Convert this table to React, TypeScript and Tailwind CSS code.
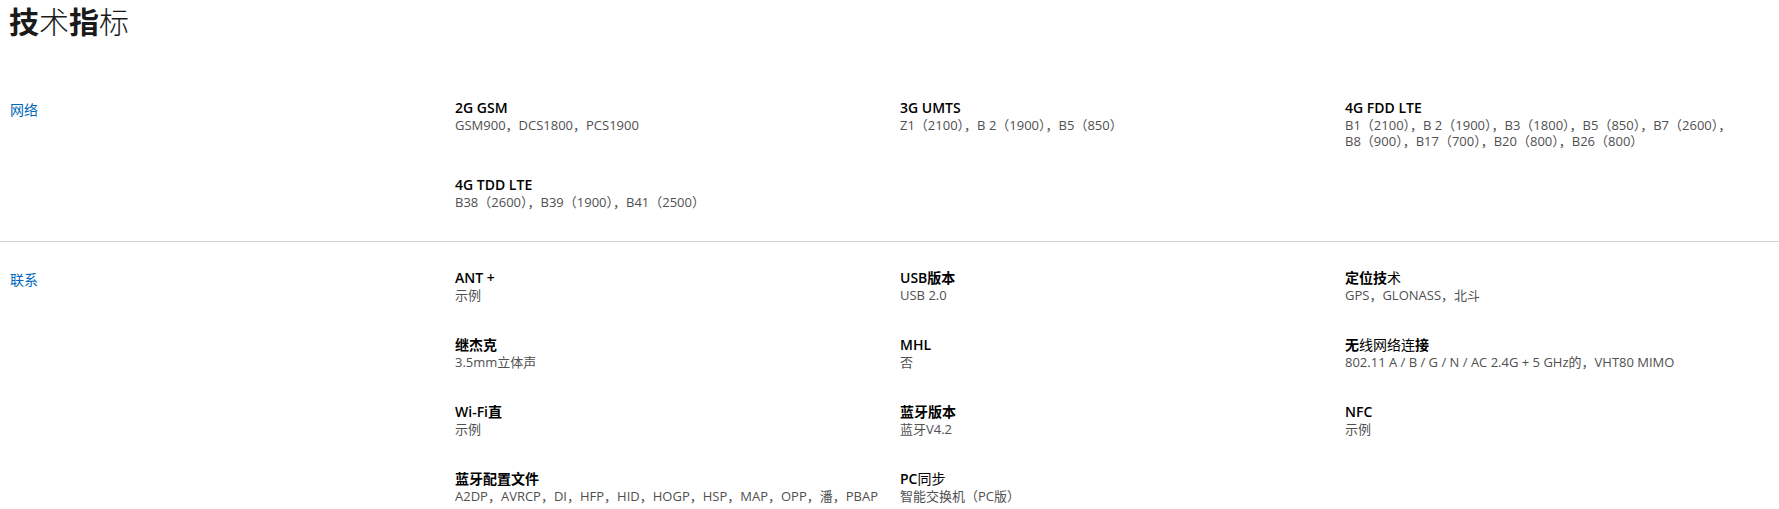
import React from 'react';

type Spec = { title: React.ReactNode; value: string };

const FONT = "font-['Open_Sans','Noto_Sans_CJK_SC',sans-serif]";

const network: Spec[] = [
  { title: '2G GSM', value: 'GSM900，DCS1800，PCS1900' },
  { title: '3G UMTS', value: 'Z1（2100），B 2（1900），B5（850）' },
  {
    title: '4G FDD LTE',
    value: 'B1（2100），B 2（1900），B3（1800），B5（850），B7（2600），B8（900），B17（700），B20（800），B26（800）',
  },
  { title: '4G TDD LTE', value: 'B38（2600），B39（1900），B41（2500）' },
];

// some glyphs fall back to a regular weight in the original, keep that look
const Thin = ({ children }: { children: React.ReactNode }) => <span className="font-normal">{children}</span>;

const contact: Spec[] = [
  { title: 'ANT +', value: '示例' },
  { title: 'USB版本', value: 'USB 2.0' },
  { title: <>定位技<Thin>术</Thin></>, value: 'GPS，GLONASS，北斗' },
  { title: '继杰克', value: '3.5mm立体声' },
  { title: 'MHL', value: '否' },
  { title: <>无<Thin>线网络连</Thin>接</>, value: '802.11 A / B / G / N / AC 2.4G + 5 GHz的，VHT80 MIMO' },
  { title: 'Wi-Fi直', value: '示例' },
  { title: '蓝牙版本', value: '蓝牙V4.2' },
  { title: 'NFC', value: '示例' },
  { title: '蓝牙配置文件', value: 'A2DP，AVRCP，DI，HFP，HID，HOGP，HSP，MAP，OPP，潘，PBAP' },
  { title: <>PC<Thin>同步</Thin></>, value: '智能交换机（PC版）' },
];

function SpecItem({ spec }: { spec: Spec }) {
  return (
    <div className="pr-[10px]">
      <div className="text-[14px] leading-[18px] font-semibold text-black">{spec.title}</div>
      <div className="text-[13px] leading-[16px] text-[#505050]">{spec.value}</div>
    </div>
  );
}

function Section({ label, items, gap, className }: { label: string; items: Spec[]; gap: string; className: string }) {
  return (
    <div className={`flex ${className}`}>
      <div className="w-[455px] shrink-0 pl-[10px]">
        <span className="block mt-[2px] text-[14px] leading-[18px] text-[#0067b8]">{label}</span>
      </div>
      <div className={`grid grid-cols-[445px_445px_400px] ${gap}`}>
        {items.map((s, i) => (
          <SpecItem key={i} spec={s} />
        ))}
      </div>
    </div>
  );
}

export default function App() {
  return (
    <div className={`w-full min-h-[509px] bg-white ${FONT}`}>
      <h1 className="pl-[9px] text-[30px] leading-[44px] text-[#1a1a1a]">
        <span className="font-bold">技</span>
        <span className="font-light">术</span>
        <span className="font-bold">指</span>
        <span className="font-light">标</span>
      </h1>

      <Section label="网络" items={network} gap="gap-y-[27px]" className="pt-[55px] pb-[31px] border-b border-[#d2d2d2]" />
      <Section label="联系" items={contact} gap="gap-y-[33px]" className="pt-[27px] pb-[6px]" />
    </div>
  );
}
